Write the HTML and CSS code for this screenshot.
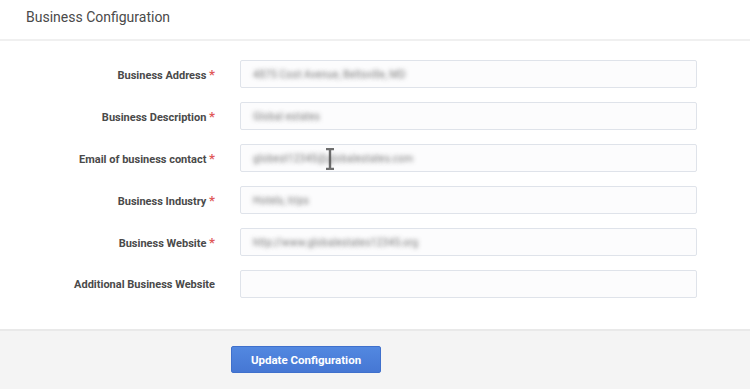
FILE: index.html
```html
<!DOCTYPE html>
<html lang="en">
<head>
  <meta charset="UTF-8">
  <title>Business Configuration</title>
  <link rel="stylesheet" href="styles.css">
</head>
<body>
  <div class="page-header">Business Configuration</div>
  <form class="config-form">
    <div class="form-row">
      <label>Business Address <span class="req">*</span></label>
      <div class="field"><span class="value">4875 Coot Avenue, Beltsville, MD</span></div>
    </div>
    <div class="form-row">
      <label>Business Description <span class="req">*</span></label>
      <div class="field"><span class="value">Global estates</span></div>
    </div>
    <div class="form-row">
      <label>Email of business contact <span class="req">*</span></label>
      <div class="field">
        <span class="value">globest12345@globalestates.com</span>
        <svg class="ibeam" width="10" height="22" viewBox="0 0 10 22"><path d="M1 1h3l1 1 1-1h3M5 2v18M1 21h3l1-1 1 1h3" stroke="#555" stroke-width="2.4" fill="none"/></svg>
      </div>
    </div>
    <div class="form-row">
      <label>Business Industry <span class="req">*</span></label>
      <div class="field"><span class="value">Hotels, trips</span></div>
    </div>
    <div class="form-row">
      <label>Business Website <span class="req">*</span></label>
      <div class="field"><span class="value">http://www.globalestates12345.org</span></div>
    </div>
    <div class="form-row">
      <label>Additional Business Website</label>
      <div class="field"></div>
    </div>
  </form>
  <div class="form-footer">
    <button type="button" class="btn-primary">Update Configuration</button>
  </div>
</body>
</html>
```

FILE: styles.css
```css
body {
  margin: 0;
  background: #fff;
  font-family: Roboto, 'Liberation Sans', sans-serif;
  color: #444;
}
.page-header {
  height: 39px;
  padding-left: 26px;
  font-size: 14px;
  line-height: 34px;
  color: #4a4a4a;
  border-bottom: 2px solid #f0f0f0;
}
.config-form {
  display: flex;
  flex-direction: column;
  gap: 14px;
  padding: 19px 0 31px;
}
.form-row {
  display: grid;
  grid-template-columns: 215px 457px;
  column-gap: 25px;
  align-items: center;
}
.form-row label {
  text-align: right;
  font-size: 11px;
  font-weight: bold;
  color: #4a4a4a;
}
.req {
  color: #e05a5a;
  font-size: 13px;
}
.field {
  position: relative;
  height: 26px;
  border: 1px solid #dfe3ea;
  border-radius: 2px;
  background: #fcfcfd;
  display: flex;
  align-items: center;
  padding-left: 12px;
}
.value {
  font-size: 10.5px;
  color: transparent;
  text-shadow: 0 0 4px rgba(100, 100, 100, 0.85);
}
.ibeam {
  position: absolute;
  left: 84px;
  top: 3px;
  opacity: 0.85;
}
.form-footer {
  height: 60px;
  background: #f4f4f4;
  border-top: 2px solid #e9e9e9;
  padding: 15px 0 0 231px;
  box-sizing: border-box;
}
.btn-primary {
  width: 150px;
  height: 27px;
  border: 1px solid #3f70cc;
  border-radius: 2px;
  background: linear-gradient(#5288e0, #4677d4);
  color: #fff;
  font-family: Roboto, 'Liberation Sans', sans-serif;
  font-weight: bold;
  font-size: 11.5px;
}
```
